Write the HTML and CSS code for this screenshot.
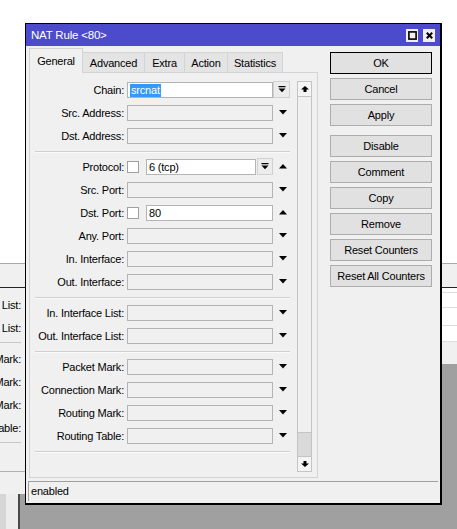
FILE: index.html
```html
<!DOCTYPE html>
<html>
<head>
<meta charset="utf-8">
<link rel="stylesheet" href="styles.css">
</head>
<body>
<div class="app">
  <div class="app-top"></div>
  <div class="app-bar"></div>
  <div class="app-main">
    <div class="app-left">
      <div class="bl-rows">
        <div class="bl-row"><span>In. Interface List:</span></div>
        <div class="bl-row"><span>Out. Interface List:</span></div>
        <div class="bl-sep"></div>
        <div class="bl-row"><span>Packet Mark:</span></div>
        <div class="bl-row"><span>Connection Mark:</span></div>
        <div class="bl-row"><span>Routing Mark:</span></div>
        <div class="bl-row"><span>Routing Table:</span></div>
        <div class="bl-sep"></div>
      </div>
      <div class="bl-fill"></div>
      <div class="bl-foot"></div>
      <div class="bl-stripes">
        <div class="st st1"></div>
        <div class="st st2"></div>
        <div class="st st3"></div>
        <div class="st st4"></div>
      </div>
    </div>
    <div class="app-mid"></div>
    <div class="app-right">
      <div class="br-row br-r1"></div>
      <div class="br-row br-r2"></div>
      <div class="br-row br-r3"></div>
      <div class="br-row br-r4"></div>
      <div class="br-light"></div>
      <div class="br-gray"></div>
    </div>
  </div>
</div>

<div class="win">
  <div class="titlebar">
    <span class="title">NAT Rule &lt;80&gt;</span>
    <div class="tbtns">
      <span class="tbtn"><svg width="9" height="9" viewBox="0 0 9 9"><rect x="0.9" y="0.9" width="7.2" height="7.2" fill="none" stroke="#000" stroke-width="1.6"/></svg></span>
      <span class="tbtn"><svg width="7" height="7" viewBox="0 0 7 7"><path d="M0.8 0.8L6.2 6.2M6.2 0.8L0.8 6.2" stroke="#000" stroke-width="2"/></svg></span>
    </div>
  </div>
  <div class="winbody">
    <div class="main">
      <div class="tabset">
        <div class="tabs">
          <div class="tab active t-gen">General</div>
          <div class="tab t-adv">Advanced</div>
          <div class="tab t-ext">Extra</div>
          <div class="tab t-act">Action</div>
          <div class="tab t-sta">Statistics</div>
        </div>
        <div class="panel">
          <div class="form">
            <div class="row">
              <div class="lbl">Chain:</div>
              <div class="ctrl"><div class="fld white"><span class="sel">srcnat</span></div></div>
              <div class="arr arr-left"><span class="dbtn"><svg width="8" height="7" viewBox="0 0 8 7"><path d="M0.5 0h7v1.3h-7z M0.5 2.6h7L4 6.2z"/></svg></span></div>
            </div>
            <div class="row">
              <div class="lbl">Src. Address:</div>
              <div class="ctrl"><div class="fld"></div></div>
              <div class="arr"><svg class="tri" width="8" height="5" viewBox="0 0 8 5"><path d="M0 0h8L4 4.5z"/></svg></div>
            </div>
            <div class="row">
              <div class="lbl">Dst. Address:</div>
              <div class="ctrl"><div class="fld"></div></div>
              <div class="arr"><svg class="tri" width="8" height="5" viewBox="0 0 8 5"><path d="M0 0h8L4 4.5z"/></svg></div>
            </div>
            <div class="sep"></div>
            <div class="row">
              <div class="lbl">Protocol:</div>
              <div class="ctrl"><span class="chk"></span><div class="fld white fld-short">6 (tcp)</div><span class="dbtn inl"><svg width="8" height="7" viewBox="0 0 8 7"><path d="M0.5 0h7v1.3h-7z M0.5 2.6h7L4 6.2z"/></svg></span></div>
              <div class="arr"><svg class="tri" width="8" height="5" viewBox="0 0 8 5"><path d="M0 4.5h8L4 0z"/></svg></div>
            </div>
            <div class="row">
              <div class="lbl">Src. Port:</div>
              <div class="ctrl"><div class="fld"></div></div>
              <div class="arr"><svg class="tri" width="8" height="5" viewBox="0 0 8 5"><path d="M0 0h8L4 4.5z"/></svg></div>
            </div>
            <div class="row">
              <div class="lbl">Dst. Port:</div>
              <div class="ctrl"><span class="chk"></span><div class="fld white fld-grow">80</div></div>
              <div class="arr"><svg class="tri" width="8" height="5" viewBox="0 0 8 5"><path d="M0 4.5h8L4 0z"/></svg></div>
            </div>
            <div class="row">
              <div class="lbl">Any. Port:</div>
              <div class="ctrl"><div class="fld"></div></div>
              <div class="arr"><svg class="tri" width="8" height="5" viewBox="0 0 8 5"><path d="M0 0h8L4 4.5z"/></svg></div>
            </div>
            <div class="row">
              <div class="lbl">In. Interface:</div>
              <div class="ctrl"><div class="fld"></div></div>
              <div class="arr"><svg class="tri" width="8" height="5" viewBox="0 0 8 5"><path d="M0 0h8L4 4.5z"/></svg></div>
            </div>
            <div class="row">
              <div class="lbl">Out. Interface:</div>
              <div class="ctrl"><div class="fld"></div></div>
              <div class="arr"><svg class="tri" width="8" height="5" viewBox="0 0 8 5"><path d="M0 0h8L4 4.5z"/></svg></div>
            </div>
            <div class="sep"></div>
            <div class="row">
              <div class="lbl">In. Interface List:</div>
              <div class="ctrl"><div class="fld"></div></div>
              <div class="arr"><svg class="tri" width="8" height="5" viewBox="0 0 8 5"><path d="M0 0h8L4 4.5z"/></svg></div>
            </div>
            <div class="row">
              <div class="lbl">Out. Interface List:</div>
              <div class="ctrl"><div class="fld"></div></div>
              <div class="arr"><svg class="tri" width="8" height="5" viewBox="0 0 8 5"><path d="M0 0h8L4 4.5z"/></svg></div>
            </div>
            <div class="sep"></div>
            <div class="row">
              <div class="lbl">Packet Mark:</div>
              <div class="ctrl"><div class="fld"></div></div>
              <div class="arr"><svg class="tri" width="8" height="5" viewBox="0 0 8 5"><path d="M0 0h8L4 4.5z"/></svg></div>
            </div>
            <div class="row">
              <div class="lbl">Connection Mark:</div>
              <div class="ctrl"><div class="fld"></div></div>
              <div class="arr"><svg class="tri" width="8" height="5" viewBox="0 0 8 5"><path d="M0 0h8L4 4.5z"/></svg></div>
            </div>
            <div class="row">
              <div class="lbl">Routing Mark:</div>
              <div class="ctrl"><div class="fld"></div></div>
              <div class="arr"><svg class="tri" width="8" height="5" viewBox="0 0 8 5"><path d="M0 0h8L4 4.5z"/></svg></div>
            </div>
            <div class="row">
              <div class="lbl">Routing Table:</div>
              <div class="ctrl"><div class="fld"></div></div>
              <div class="arr"><svg class="tri" width="8" height="5" viewBox="0 0 8 5"><path d="M0 0h8L4 4.5z"/></svg></div>
            </div>
            <div class="sep"></div>
          </div>
          <div class="scroll">
            <div class="sb-btn"><svg width="8" height="6" viewBox="0 0 8 6"><path d="M4 0L8 3.5H5.5V6H2.5V3.5H0Z"/></svg></div>
            <div class="sb-track"></div>
            <div class="sb-thumb"></div>
            <div class="sb-btn sb-down"><svg width="8" height="6" viewBox="0 0 8 6"><path d="M4 6L8 2.5H5.5V0H2.5V2.5H0Z"/></svg></div>
          </div>
        </div>
      </div>
      <div class="btns">
        <div class="btn def">OK</div>
        <div class="btn">Cancel</div>
        <div class="btn">Apply</div>
        <div class="btn gap-top">Disable</div>
        <div class="btn">Comment</div>
        <div class="btn">Copy</div>
        <div class="btn">Remove</div>
        <div class="btn">Reset Counters</div>
        <div class="btn">Reset All Counters</div>
      </div>
    </div>
    <div class="status">enabled</div>
  </div>
</div>
</body>
</html>
```
FILE: styles.css
```css
html, body {
  margin: 0;
  padding: 0;
}
body {
  width: 457px;
  height: 529px;
  overflow: hidden;
  position: relative;
  background: #fff;
  font-family: "Liberation Sans", Arial, sans-serif;
  font-size: 11px;
  letter-spacing: -0.2px;
  color: #000;
}

/* background application */
.app {
  display: flex;
  flex-direction: column;
  height: 529px;
}
.app-top {
  height: 263px;
  background: #fff;
}
.app-bar {
  height: 23px;
  background: #f0f0f0;
  border-top: 1px solid #a8a8a8;
  border-bottom: 1px solid #222;
}
.app-main {
  flex: 1;
  display: flex;
}
.app-left {
  width: 25px;
  display: flex;
  flex-direction: column;
  background: #f0f0f0;
}
.bl-rows {
  padding-top: 5px;
  padding-right: 4px;
}
.bl-row {
  height: 23px;
  display: flex;
  justify-content: flex-end;
  align-items: center;
  overflow: hidden;
  white-space: nowrap;
}
.bl-sep {
  height: 1px;
  background: #c8c8c8;
  margin: 3px 0 4px;
}
.bl-fill {
  height: 24px;
}
.bl-foot {
  height: 22px;
  border-top: 1px solid #b0b0b0;
}
.bl-stripes {
  flex: 1;
  display: flex;
}
.st { height: 100%; }
.st1 { width: 6px; background: #d6d6d6; }
.st2 { width: 12px; background: #ececec; }
.st3 { width: 2px; background: #4a4a4a; }
.st4 { flex: 1; background: #a0a0a0; }
.app-mid {
  flex: 1;
  background: #a0a0a0;
}
.app-right {
  width: 15px;
  display: flex;
  flex-direction: column;
  background: #fff;
}
.br-row {
  border-bottom: 1px solid #dcdcdc;
}
.br-r1 { height: 4px; }
.br-r2 { height: 14px; }
.br-r3 { height: 17px; }
.br-r4 { height: 15px; }
.br-light {
  height: 22px;
  background: #f0f0f0;
}
.br-gray {
  flex: 1;
  background: #a0a0a0;
}

/* dialog window */
.win {
  position: absolute;
  left: 25px;
  top: 23px;
  width: 414px;
  border: 1px solid #000;
  border-right-width: 2px;
  border-bottom-width: 2px;
  background: #f0f0f0;
}
.titlebar {
  height: 22px;
  background: #4b4bcb;
  display: flex;
  align-items: center;
  justify-content: space-between;
  padding: 0 5px;
}
.title {
  color: #fff;
  font-size: 11.5px;
}
.tbtns {
  display: flex;
  gap: 5px;
}
.tbtn {
  width: 12px;
  height: 13px;
  background: #efefef;
  display: flex;
  align-items: center;
  justify-content: center;
}
.winbody {
  padding: 2px 2px 2px 3px;
  height: 453px;
  display: flex;
  flex-direction: column;
}
.main {
  display: flex;
  gap: 12px;
  height: 430px;
}
.tabset {
  display: flex;
  flex-direction: column;
  width: 289px;
}
.tabs {
  display: flex;
  align-items: flex-end;
  height: 24px;
  position: relative;
  z-index: 1;
}
.tab {
  box-sizing: border-box;
  height: 20px;
  display: flex;
  align-items: center;
  justify-content: center;
  background: #e4e4e4;
  border: 1px solid #d3d3d3;
  border-bottom: none;
  border-left: none;
}
.tab.active {
  height: 25px;
  margin-bottom: -1px;
  background: #f0f0f0;
  border-left: 1px solid #d3d3d3;
  padding-bottom: 1px;
}
.t-gen { width: 54px; }
.t-adv { width: 62px; }
.t-ext { width: 40px; }
.t-act { width: 43px; }
.t-sta { width: 55px; }

.panel {
  flex: 1;
  border: 1px solid #d3d3d3;
  background: #f0f0f0;
  display: flex;
  padding: 5px 5px 0 0;
}
.form {
  width: 263px;
}
.row {
  height: 23px;
  display: flex;
  align-items: center;
}
.lbl {
  width: 94px;
  text-align: right;
  white-space: nowrap;
}
.ctrl {
  margin-left: 3px;
  width: 146px;
  display: flex;
  align-items: center;
}
.fld {
  box-sizing: border-box;
  width: 146px;
  height: 16px;
  border: 1px solid #b4b4b4;
  background: #f0f0f0;
  padding-left: 2px;
  line-height: 14px;
  white-space: nowrap;
  overflow: hidden;
}
.fld.white {
  background: #fff;
}
.fld-short {
  width: 110px;
}
.fld-grow {
  width: 127px;
}
.sel {
  background: #3399ff;
  color: #fff;
  padding: 0 1px;
  display: inline-block;
  line-height: 13px;
}
.chk {
  box-sizing: border-box;
  width: 12px;
  height: 12px;
  border: 1px solid #a0a0a0;
  background: #fff;
  margin-right: 7px;
  flex: none;
}
.arr {
  width: 20px;
  display: flex;
  justify-content: center;
  align-items: center;
}
.arr-left {
  justify-content: flex-start;
}
.dbtn {
  box-sizing: border-box;
  width: 17px;
  height: 17px;
  border: 1px solid #d0d0d0;
  background: #ececec;
  display: flex;
  align-items: center;
  justify-content: center;
}
.dbtn.inl {
  width: 16px;
  margin-left: 1px;
}
.tri {
  display: block;
}
.sep {
  height: 1px;
  background: #cfcfcf;
  border-bottom: 1px solid #fafafa;
  margin: 4px 3px 2px 5px;
}
.scroll {
  box-sizing: border-box;
  width: 15px;
  height: 391px;
  margin-top: 3px;
  margin-left: 4px;
  border: 1px solid #c4c4c4;
  background: #f0f0f0;
  display: flex;
  flex-direction: column;
}
.sb-btn {
  height: 14px;
  background: #f4f4f4;
  border-bottom: 1px solid #c4c4c4;
  display: flex;
  align-items: center;
  justify-content: center;
}
.sb-down {
  border-bottom: none;
  border-top: 1px solid #c4c4c4;
}
.sb-track {
  flex: 1;
}
.sb-thumb {
  height: 23px;
  background: #dadada;
  border-top: 1px solid #c4c4c4;
}

.btns {
  width: 102px;
  margin-top: 4px;
  display: flex;
  flex-direction: column;
  gap: 4px;
}
.btn {
  box-sizing: border-box;
  height: 22px;
  border: 1px solid #adadad;
  background: #e1e1e1;
  text-align: center;
  line-height: 20px;
  white-space: nowrap;
}
.btn.def {
  border-color: #000;
}
.gap-top {
  margin-top: 5px;
}
.status {
  margin-top: 3px;
  margin-right: 0;
  margin-left: -1px;
  height: 20px;
  box-sizing: border-box;
  border-top: 1px solid #a0a0a0;
  border-left: 1px solid #a0a0a0;
  padding-left: 2px;
  line-height: 18px;
}
```
